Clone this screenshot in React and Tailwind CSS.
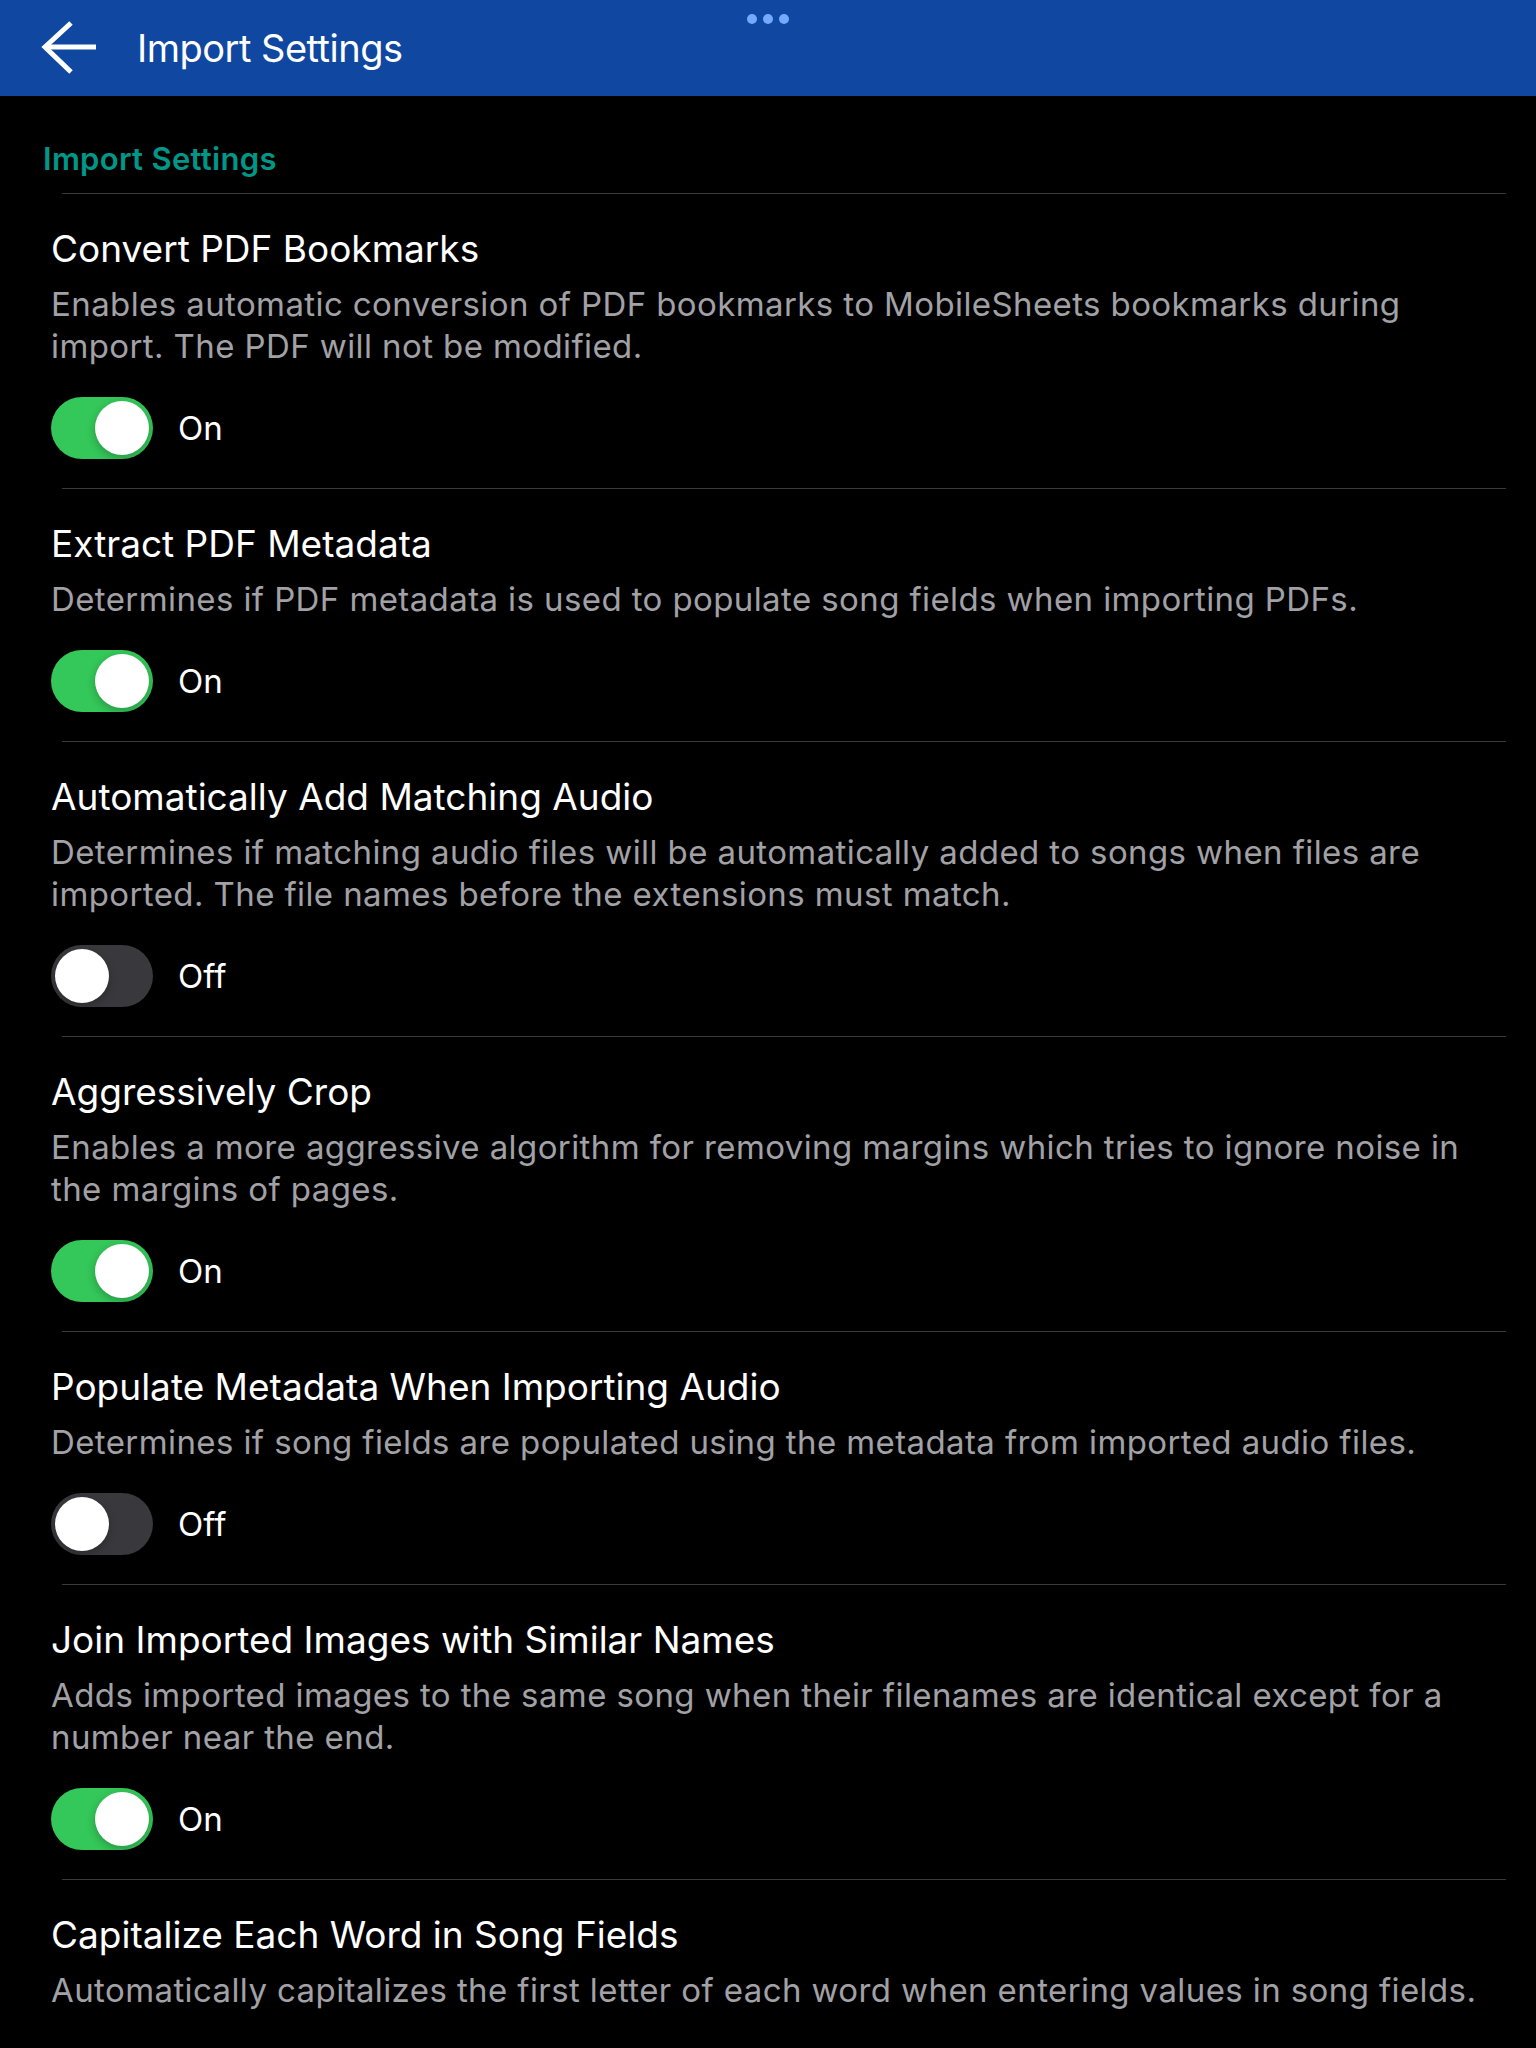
import React from "react";

const settings = [
  {
    title: "Convert PDF Bookmarks",
    desc: "Enables automatic conversion of PDF bookmarks to MobileSheets bookmarks during import. The PDF will not be modified.",
    on: true,
  },
  {
    title: "Extract PDF Metadata",
    desc: "Determines if PDF metadata is used to populate song fields when importing PDFs.",
    on: true,
  },
  {
    title: "Automatically Add Matching Audio",
    desc: "Determines if matching audio files will be automatically added to songs when files are imported. The file names before the extensions must match.",
    on: false,
  },
  {
    title: "Aggressively Crop",
    desc: "Enables a more aggressive algorithm for removing margins which tries to ignore noise in the margins of pages.",
    on: true,
  },
  {
    title: "Populate Metadata When Importing Audio",
    desc: "Determines if song fields are populated using the metadata from imported audio files.",
    on: false,
  },
  {
    title: "Join Imported Images with Similar Names",
    desc: "Adds imported images to the same song when their filenames are identical except for a number near the end.",
    on: true,
  },
  {
    title: "Capitalize Each Word in Song Fields",
    desc: "Automatically capitalizes the first letter of each word when entering values in song fields.",
    on: null,
  },
];

function Toggle({ on }) {
  return (
    <div className="flex items-center gap-[25px]">
      <div
        className={`w-[102px] h-[62px] rounded-full p-[4px] flex ${
          on ? "bg-[#34c759] justify-end" : "bg-[#39393d] justify-start"
        }`}
      >
        <div className="w-[54px] h-[54px] rounded-full bg-white shadow-[0_3px_8px_rgba(0,0,0,0.25)]" />
      </div>
      <span className="text-[33px] leading-none text-white">{on ? "On" : "Off"}</span>
    </div>
  );
}

export default function App() {
  return (
    <div className="min-h-screen bg-black font-['Inter',sans-serif] overflow-hidden">
      {/* Top bar */}
      <header className="relative h-[96px] bg-[#0f47a1] flex items-center">
        <div className="absolute top-[14px] left-1/2 -translate-x-1/2 flex gap-[6px]">
          <span className="w-[10px] h-[10px] rounded-full bg-[#74a9ff]" />
          <span className="w-[10px] h-[10px] rounded-full bg-[#74a9ff]" />
          <span className="w-[10px] h-[10px] rounded-full bg-[#74a9ff]" />
        </div>
        <button className="ml-[40px] w-[58px] h-[56px] flex items-center justify-center">
          <svg width="58" height="56" viewBox="0 0 58 56" fill="none" stroke="white" strokeWidth="5">
            <path d="M56 27H5" />
            <path d="M31 3L5 27l26 25" strokeLinecap="butt" strokeLinejoin="miter" />
          </svg>
        </button>
        <h1 className="ml-[39px] text-[38px] leading-none text-white tracking-[-0.5px]">Import Settings</h1>
      </header>

      <main className="pt-[43px]">
        <h2 className="pl-[43px] text-[31px] leading-[40px] font-semibold tracking-[0.3px] text-[#009688] pb-[14px]">
          Import Settings
        </h2>

        {settings.map((s) => (
          <div key={s.title}>
            <div className="ml-[62px] mr-[30px] h-px bg-[#3a3a3c]" />
            <div className="pl-[51px] pr-[50px] pt-[33px] pb-[29px]">
              <div className="text-[37px] leading-[44px] text-white">{s.title}</div>
              <p className="mt-[12px] text-[33px] leading-[42px] tracking-[0.4px] text-[#a1a1a6]">{s.desc}</p>
              {s.on !== null && (
                <div className="mt-[30px]">
                  <Toggle on={s.on} />
                </div>
              )}
            </div>
          </div>
        ))}
      </main>
    </div>
  );
}
